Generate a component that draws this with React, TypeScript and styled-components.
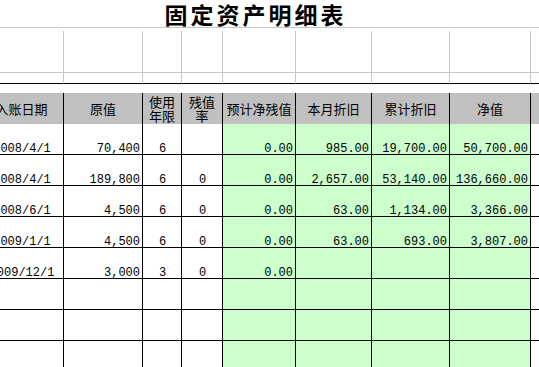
import React from 'react';
import styled, { createGlobalStyle } from 'styled-components';

const GlobalStyle = createGlobalStyle`
  html, body {
    margin: 0;
    padding: 0;
    background: #fff;
  }
  body {
    font-family: "Noto Sans CJK SC", "Liberation Sans", sans-serif;
  }
`;

// column widths, the first one starts off-screen on the left
const COLS = [84, 79, 39, 41, 73, 76, 78, 81, 40];

type Align = 'left' | 'center' | 'right';

interface IRow {
  date: string;
  cost: string;
  years: string;
  rate: string;
  residual: string;
  monthly: string;
  total: string;
  net: string;
}

const rows: IRow[] = [
  { date: '2008/4/1', cost: '70,400', years: '6', rate: '', residual: '0.00', monthly: '985.00', total: '19,700.00', net: '50,700.00' },
  { date: '2008/4/1', cost: '189,800', years: '6', rate: '0', residual: '0.00', monthly: '2,657.00', total: '53,140.00', net: '136,660.00' },
  { date: '2008/6/1', cost: '4,500', years: '6', rate: '0', residual: '0.00', monthly: '63.00', total: '1,134.00', net: '3,366.00' },
  { date: '2009/1/1', cost: '4,500', years: '6', rate: '0', residual: '0.00', monthly: '63.00', total: '693.00', net: '3,807.00' },
  { date: '2009/12/1', cost: '3,000', years: '3', rate: '0', residual: '0.00', monthly: '', total: '', net: '' },
  { date: '', cost: '', years: '', rate: '', residual: '', monthly: '', total: '', net: '' },
  { date: '', cost: '', years: '', rate: '', residual: '', monthly: '', total: '', net: '' },
  { date: '', cost: '', years: '', rate: '', residual: '', monthly: '', total: '', net: '' },
];

const headers: React.ReactNode[] = [
  '入账日期',
  '原值',
  <>使用<br />年限</>,
  <>残值<br />率</>,
  '预计净残值',
  '本月折旧',
  '累计折旧',
  '净值',
  '',
];

export default function App() {
  return (
    <>
      <GlobalStyle />
      <Viewport>
        <Sheet>
          <TitleCell>固定资产明细表</TitleCell>
          <BlankCell />

          {COLS.map((_, i) => (
            <TopCell key={`a${i}`} $height={42} />
          ))}
          {COLS.map((_, i) => (
            <TopCell key={`b${i}`} $height={22} $last />
          ))}

          {headers.map((h, i) => (
            <HeadCell key={`h${i}`}>{h}</HeadCell>
          ))}

          {rows.map((r, ri) => (
            <React.Fragment key={ri}>
              <DataCell $align="center">{r.date}</DataCell>
              <DataCell $align="right">{r.cost}</DataCell>
              <DataCell $align="center">{r.years}</DataCell>
              <DataCell $align="center">{r.rate}</DataCell>
              <DataCell $align="right" $green>{r.residual}</DataCell>
              <DataCell $align="right" $green>{r.monthly}</DataCell>
              <DataCell $align="right" $green>{r.total}</DataCell>
              <DataCell $align="right" $green>{r.net}</DataCell>
              <DataCell $align="left" />
            </React.Fragment>
          ))}
        </Sheet>
      </Viewport>
    </>
  );
}

const Viewport = styled.div`
  width: 539px;
  height: 367px;
  overflow: hidden;
  background: #fff;
`;

const Sheet = styled.div`
  display: grid;
  grid-template-columns: ${COLS.map((w) => `${w}px`).join(' ')};
  grid-auto-rows: 31px;
  margin-left: -20px;
  width: ${COLS.reduce((a, b) => a + b, 0)}px;
`;

const TitleCell = styled.div`
  grid-column: 1 / span 8;
  height: 28px;
  box-sizing: border-box;
  border-bottom: 1px solid #c6c6c6;
  display: flex;
  align-items: center;
  justify-content: center;
  font-family: "Noto Sans CJK SC", sans-serif;
  font-weight: 700;
  font-size: 23px;
  letter-spacing: 3px;
  color: #000;
  line-height: 28px;
`;

const BlankCell = styled.div`
  height: 28px;
  box-sizing: border-box;
  border-bottom: 1px solid #c6c6c6;
`;

const TopCell = styled.div<{ $height: number; $last?: boolean }>`
  height: ${(p) => p.$height}px;
  box-sizing: border-box;
  border-right: 1px solid #c6c6c6;
  border-bottom: 1px solid ${(p) => (p.$last ? '#000' : '#c6c6c6')};
`;

const HeadCell = styled.div`
  height: 32px;
  box-sizing: border-box;
  background: #c0c0c0;
  border-right: 1px solid #000;
  border-bottom: 1px solid #000;
  display: flex;
  align-items: center;
  justify-content: center;
  text-align: center;
  font-size: 13px;
  line-height: 14px;
  color: #000;
  white-space: nowrap;
`;

const DataCell = styled.div<{ $align: Align; $green?: boolean }>`
  height: 31px;
  box-sizing: border-box;
  background: ${(p) => (p.$green ? '#ccffcc' : '#fff')};
  border-right: 1px solid #000;
  border-bottom: 1px solid #000;
  display: flex;
  align-items: flex-end;
  justify-content: ${(p) =>
    p.$align === 'right' ? 'flex-end' : p.$align === 'center' ? 'center' : 'flex-start'};
  padding: 0 2px 0 3px;
  font-family: "Liberation Mono", "DejaVu Sans Mono", monospace;
  font-size: 12px;
  line-height: 10px;
  color: #000;
  white-space: nowrap;
`;
